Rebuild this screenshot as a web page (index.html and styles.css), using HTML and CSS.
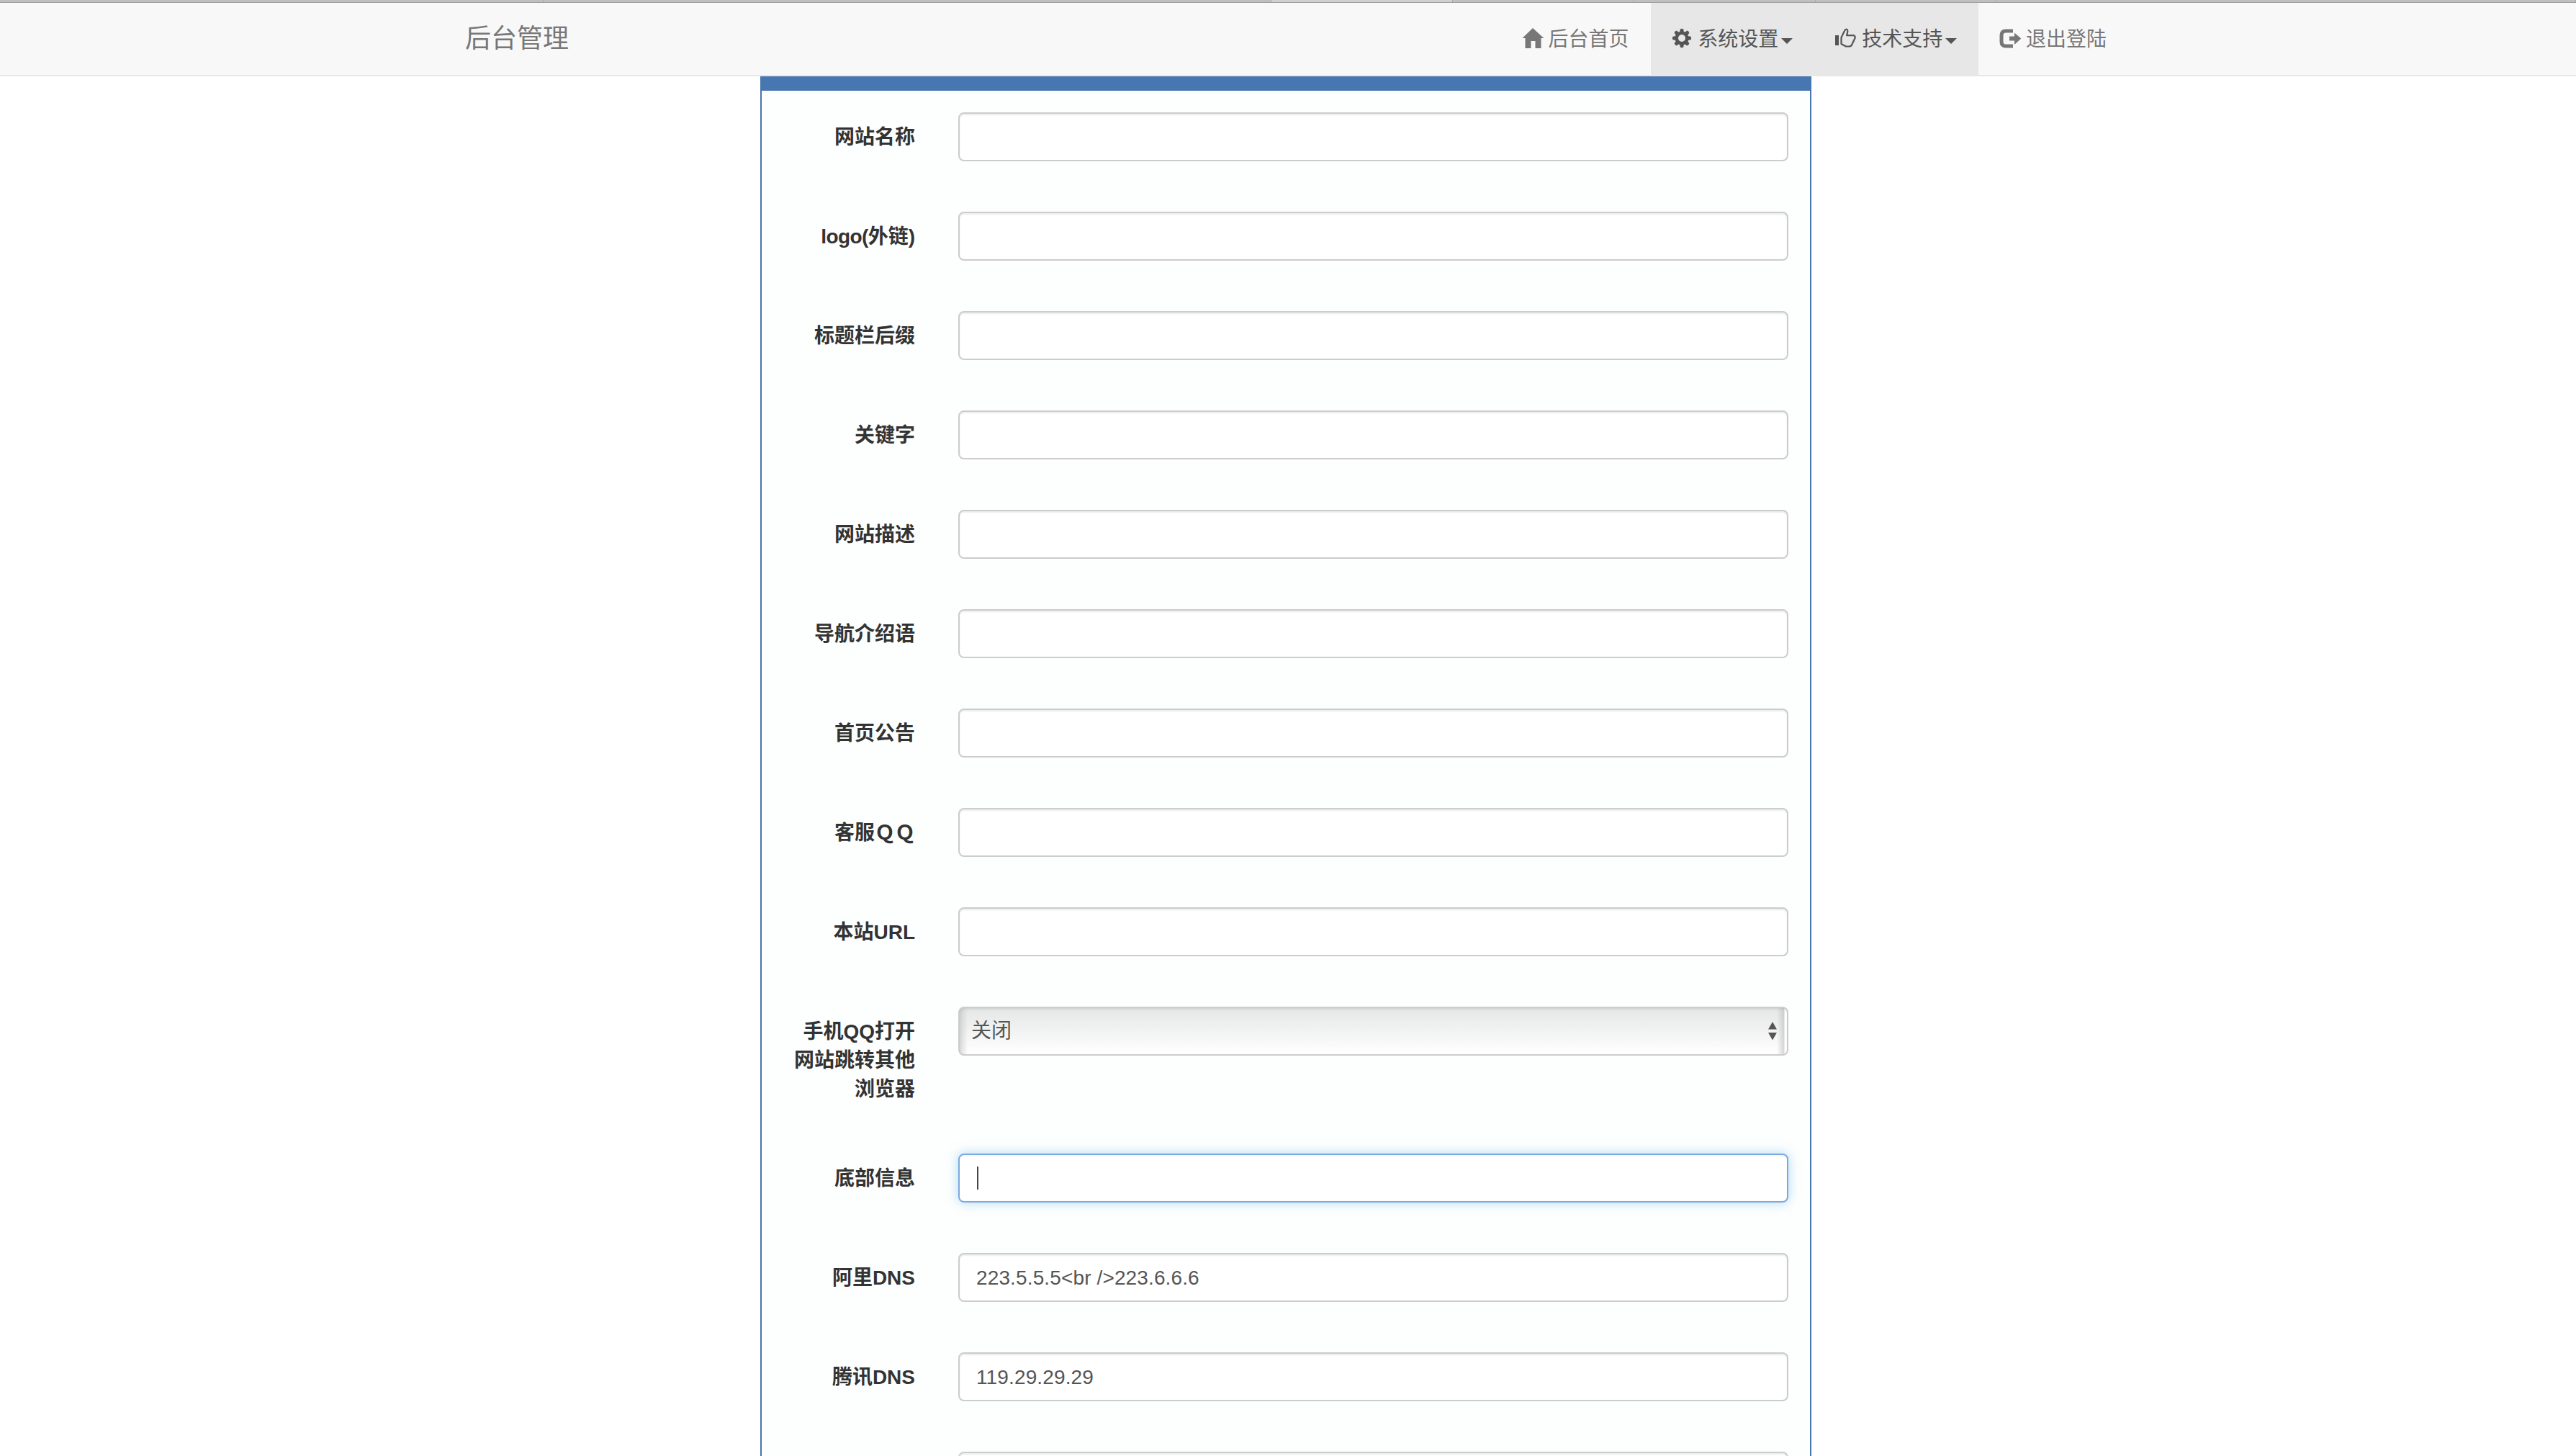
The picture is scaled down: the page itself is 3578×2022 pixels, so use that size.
FILE: index.html
```html
<!DOCTYPE html>
<html lang="zh-CN">
<head>
<meta charset="utf-8">
<title>后台管理</title>
<link rel="stylesheet" href="styles.css">
</head>
<body>
<div class="tabs-edge"><i></i><i></i><i class="current"></i><i></i><i></i><i></i><i></i></div>
<nav class="navbar">
  <div class="container">
    <a class="brand">后台管理</a>
    <ul class="menu">
      <li><svg class="icon" viewBox="0 0 28 28"><path d="M14 0 29.4 14H25.500V28H17.500V18H11.500V28H3.500V14H-.5Z"/></svg><span>后台首页</span></li>
      <li class="active"><svg class="icon" viewBox="0 0 28 28"><g transform="translate(13 14)"><path fill-rule="evenodd" d="M-9.500 0A9.500 9.500 0 1 0 9.500 0 9.500 9.500 0 1 0-9.500 0ZM-5 0A5 5 0 1 1 5 0 5 5 0 1 1-5 0Z"/><g id="teeth"><path d="M-3-8-2.200-12.500Q0-14 2.200-12.500L3-8Z"/><path d="M-3-8-2.200-12.500Q0-14 2.200-12.500L3-8Z" transform="rotate(45)"/><path d="M-3-8-2.200-12.500Q0-14 2.200-12.500L3-8Z" transform="rotate(90)"/><path d="M-3-8-2.200-12.500Q0-14 2.200-12.500L3-8Z" transform="rotate(135)"/></g><use href="#teeth" transform="rotate(180)"/></g></svg><span>系统设置</span><b class="caret"></b></li>
      <li class="active"><svg class="icon" viewBox="0 0 28 28"><path d="M-1 10H4V24H-1Z"/><path fill="none" stroke="currentColor" stroke-width="2.200" stroke-linejoin="round" d="M7.500 13 12.500 3Q14 .7 16 2.500C17 4 16 7 15 10.200H25Q27.300 11.500 26.500 14L22 23.500Q21 25.500 18 25.500H14L7.500 22Z"/></svg><span>技术支持</span><b class="caret"></b></li>
      <li><svg class="icon" viewBox="0 0 28 28"><path fill="none" stroke="currentColor" stroke-width="5" d="M18 4H8Q2 4 2 10V19Q2 25 8 25H18"/><path d="M13 11.500H20V6.500L29.300 14.500 20 23V17.500H13Z"/></svg><span>退出登陆</span></li>
    </ul>
  </div>
</nav>
<main class="panel">
  <form class="rows">
    <div class="row"><label>网站名称</label><div class="field"></div></div>
    <div class="row"><label><span class="latin">logo(</span>外链)</label><div class="field"></div></div>
    <div class="row"><label>标题栏后缀</label><div class="field"></div></div>
    <div class="row"><label>关键字</label><div class="field"></div></div>
    <div class="row"><label>网站描述</label><div class="field"></div></div>
    <div class="row"><label>导航介绍语</label><div class="field"></div></div>
    <div class="row"><label>首页公告</label><div class="field"></div></div>
    <div class="row"><label>客服ＱＱ</label><div class="field"></div></div>
    <div class="row"><label>本站URL</label><div class="field"></div></div>
    <div class="row"><label>手机QQ打开<br>网站跳转其他<br>浏览器</label><div class="field select"><span>关闭</span><svg class="arrows" viewBox="0 0 12 26"><path d="M6 0 12 10.500H0ZM0 15H12L6 25.500Z"/></svg></div></div>
    <div class="row"><label>底部信息</label><div class="field focused"><i class="cursor"></i></div></div>
    <div class="row"><label>阿里DNS</label><div class="field"><span class="value">223.5.5.5&lt;br /&gt;223.6.6.6</span></div></div>
    <div class="row"><label>腾讯DNS</label><div class="field"><span class="value">119.29.29.29</span></div></div>
    <div class="row"><label></label><div class="field"></div></div>
  </form>
</main>
</body>
</html>
```
FILE: styles.css
```css
* { box-sizing: border-box; }
html { background: #fff; }
body {
  margin: 0;
  height: 2022px;
  overflow: hidden;
  display: flex;
  flex-direction: column;
  background: #fff;
  color: #333;
  font: 28px/40px "Liberation Sans", "Noto Sans CJK SC", sans-serif;
}
.tabs-edge {
  height: 4px;
  flex: none;
  display: grid;
  grid-template-columns: 755px 1011px 252px 252px 252px 252px 1fr;
  background: #bfbfbf;
  border-bottom: 1px solid #a0a0a0;
}
.tabs-edge i { border-right: 1px solid #aaa; }
.tabs-edge .current { background: #d0d0d0; }
.navbar {
  height: 102px;
  flex: none;
  background: #f8f8f8;
  border-bottom: 2px solid #e7e7e7;
  color: #777;
}
.container {
  width: 2340px;
  margin-left: 616px;
  display: flex;
  justify-content: space-between;
}
.brand { padding: 30px; font-size: 36px; line-height: 40px; }
.menu { margin: 0; padding: 0; list-style: none; display: flex; }
.menu li { height: 102px; padding: 0 30px 2px; display: flex; align-items: center; }
.menu .active { background: #e7e7e7; color: #555; }
.menu span { padding-top: 2px; }
.icon {
  width: 28px;
  height: 28px;
  margin: -2px 7.8px 0 0;
  overflow: visible;
  fill: currentColor;
}
.caret {
  margin: 5px 0 0 4px;
  border-top: 8px solid;
  border-left: 8px solid transparent;
  border-right: 8px solid transparent;
}
.panel {
  width: 1460px;
  margin-left: 1056px;
  flex: 1;
  min-height: 0;
  overflow: hidden;
  border: solid #4876b1;
  border-width: 20px 2px 0;
  background: #fdfffe;
}
.rows { padding: 30px 30px 0; display: flex; flex-direction: column; gap: 70px; }
.row { display: grid; grid-template-columns: 183px 1153px; column-gap: 60px; align-items: start; }
.row label {
  height: 68px;
  padding-top: 15px;
  text-align: right;
  font-weight: bold;
}
.row:has(.select) { height: 134px; }
.latin { letter-spacing: -.6px; }
.value { letter-spacing: .13px; margin-left: -1px; padding-top: 1px; }
.field {
  height: 68px;
  padding: 0 24px;
  display: flex;
  align-items: center;
  border: 2px solid #ccc;
  border-radius: 8px;
  background: #fff;
  color: #555;
  box-shadow: inset 0 2px 2px rgba(0, 0, 0, .075);
}
.select {
  padding: 0 14px 0 16px;
  justify-content: space-between;
  background: linear-gradient(90deg, #bbb8 0, #bbb0 11px, #bbb0 calc(100% - 14px), #bbb9 calc(100% - 4px), #fff calc(100% - 3px)), linear-gradient(#e5e6e6, #fff);
}
.arrows { width: 12px; height: 26px; fill: #555; }
.focused {
  border-color: #7baade;
  box-shadow: inset 0 2px 2px rgba(0, 0, 0, .04), 0 0 16px rgba(102, 175, 233, .5);
}
.cursor { width: 2px; height: 32px; background: #444; }
```
